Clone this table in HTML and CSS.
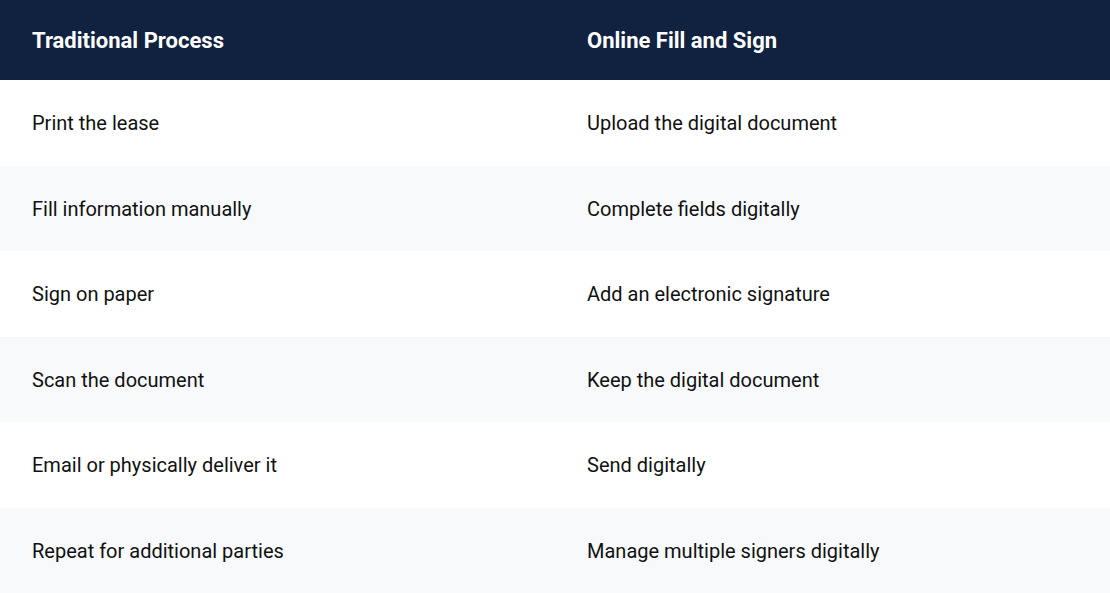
FILE: index.html
```html
<!DOCTYPE html>
<html lang="en">
<head>
<meta charset="utf-8">
<title>Traditional vs Online Fill and Sign</title>
<link rel="stylesheet" href="styles.css">
</head>
<body>
<table class="compare">
  <thead>
    <tr><th>Traditional Process</th><th>Online Fill and Sign</th></tr>
  </thead>
  <tbody>
    <tr><td>Print the lease</td><td>Upload the digital document</td></tr>
    <tr><td>Fill information manually</td><td>Complete fields digitally</td></tr>
    <tr><td>Sign on paper</td><td>Add an electronic signature</td></tr>
    <tr><td>Scan the document</td><td>Keep the digital document</td></tr>
    <tr><td>Email or physically deliver it</td><td>Send digitally</td></tr>
    <tr><td>Repeat for additional parties</td><td>Manage multiple signers digitally</td></tr>
  </tbody>
</table>
</body>
</html>
```
FILE: styles.css
```css
html, body {
  margin: 0;
  padding: 0;
  background: #ffffff;
}
body {
  font-family: Roboto, "Liberation Sans", sans-serif;
  color: #111111;
}
.compare {
  width: 100%;
  border-collapse: collapse;
  table-layout: fixed;
}
.compare th {
  background: #112240;
  color: #ffffff;
  font-weight: 700;
  font-size: 22px;
  line-height: 24px;
  text-align: left;
  padding: 28.5px 32px 27.5px;
}
.compare td {
  font-size: 20px;
  line-height: 24px;
  padding: 31px 32px 30.5px;
  text-align: left;
}
.compare tbody tr:nth-child(even) td {
  background: #f8f9fb;
}
```
